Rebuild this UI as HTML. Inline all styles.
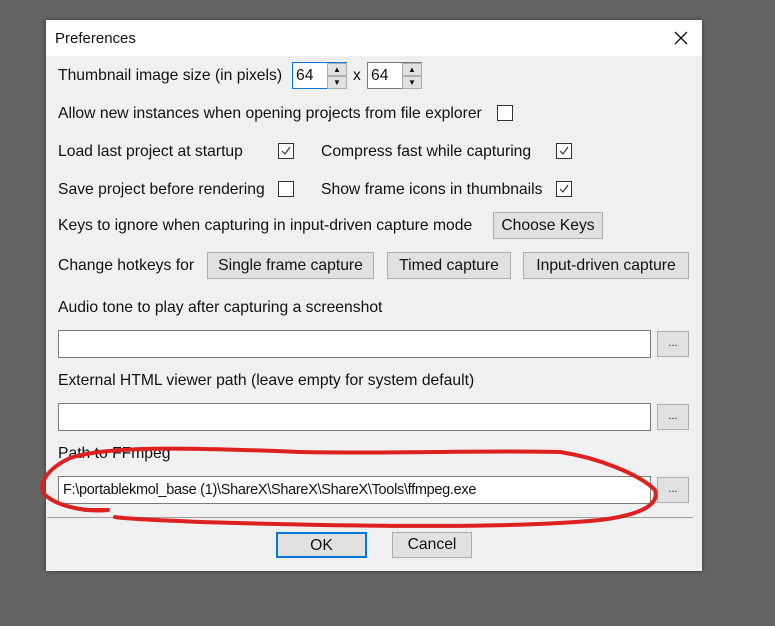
<!DOCTYPE html>
<html><head><style>
body{margin:0;width:775px;height:626px;background:#646464;position:relative;overflow:hidden;font-family:"Liberation Sans",sans-serif;font-size:15.7px;color:#111}
.d{position:absolute;left:46px;top:20px;width:656px;height:551px;background:#f0f0f0;box-shadow:0 0 4px rgba(0,0,0,.5)}
.t{position:absolute;left:0;top:0;width:656px;height:36px;background:#fff}
.a{position:absolute;white-space:nowrap}
.cb{position:absolute;width:14px;height:14px;border:1px solid #333;background:#fff}
.cb svg{position:absolute;left:1px;top:1px}
.b{position:absolute;background:#e1e1e1;border:1px solid #adadad;box-sizing:border-box;text-align:center;white-space:nowrap}
.tb{position:absolute;background:#fff;border:1px solid #7a7a7a;box-sizing:border-box}
</style></head><body>
<div class="d">
<div class="t"></div>
<div class="a" style="left:9px;top:10px;font-size:15px">Preferences</div>
<svg class="a" style="left:628px;top:11px" width="14" height="14"><path d="M1 1L13 13M13 1L1 13" stroke="#111" stroke-width="1.3"/></svg>
</div>
<div class="a" style="left:58px;top:67px">Thumbnail image size (in pixels)</div>
<div class="tb" style="left:292px;top:62px;width:55px;height:27px;border-color:#0078d7"><span class="a" style="left:3px;top:4px">64</span></div>
<div class="b" style="left:327px;top:63px;width:20px;height:13px;font-size:8px;line-height:11px">▲</div>
<div class="b" style="left:327px;top:76px;width:20px;height:13px;font-size:8px;line-height:11px">▼</div>
<div class="a" style="left:353px;top:67px">x</div>
<div class="tb" style="left:367px;top:62px;width:55px;height:27px"><span class="a" style="left:3px;top:4px">64</span></div>
<div class="b" style="left:402px;top:63px;width:20px;height:13px;font-size:8px;line-height:11px">▲</div>
<div class="b" style="left:402px;top:76px;width:20px;height:13px;font-size:8px;line-height:11px">▼</div>
<div class="a" style="left:58px;top:105px">Allow new instances when opening projects from file explorer</div>
<div class="cb" style="left:497px;top:105px"></div>
<div class="a" style="left:58px;top:143px">Load last project at startup</div>
<div class="cb" style="left:278px;top:143px"><svg width="12" height="12"><path d="M2 6L5 9L10 2" stroke="#333" fill="none" stroke-width="1.2"/></svg></div>
<div class="a" style="left:321px;top:143px">Compress fast while capturing</div>
<div class="cb" style="left:556px;top:143px"><svg width="12" height="12"><path d="M2 6L5 9L10 2" stroke="#333" fill="none" stroke-width="1.2"/></svg></div>
<div class="a" style="left:58px;top:181px">Save project before rendering</div>
<div class="cb" style="left:278px;top:181px"></div>
<div class="a" style="left:321px;top:181px">Show frame icons in thumbnails</div>
<div class="cb" style="left:556px;top:181px"><svg width="12" height="12"><path d="M2 6L5 9L10 2" stroke="#333" fill="none" stroke-width="1.2"/></svg></div>
<div class="a" style="left:58px;top:217px">Keys to ignore when capturing in input-driven capture mode</div>
<div class="b" style="left:493px;top:212px;width:110px;height:27px;line-height:25px">Choose Keys</div>
<div class="a" style="left:58px;top:257px">Change hotkeys for</div>
<div class="b" style="left:207px;top:252px;width:167px;height:27px;line-height:25px">Single frame capture</div>
<div class="b" style="left:387px;top:252px;width:124px;height:27px;line-height:25px">Timed capture</div>
<div class="b" style="left:523px;top:252px;width:166px;height:27px;line-height:25px">Input-driven capture</div>
<div class="a" style="left:58px;top:299px">Audio tone to play after capturing a screenshot</div>
<div class="tb" style="left:58px;top:330px;width:593px;height:28px"></div>
<div class="b" style="left:657px;top:331px;width:32px;height:26px;font-size:11px;line-height:22px">...</div>
<div class="a" style="left:58px;top:372px">External HTML viewer path (leave empty for system default)</div>
<div class="tb" style="left:58px;top:403px;width:593px;height:28px"></div>
<div class="b" style="left:657px;top:404px;width:32px;height:26px;font-size:11px;line-height:22px">...</div>
<div class="a" style="left:58px;top:445px">Path to FFmpeg</div>
<div class="tb" style="left:58px;top:476px;width:593px;height:28px"><span class="a" style="left:4px;top:5px;font-size:14.5px;letter-spacing:-0.3px">F:\portablekmol_base (1)\ShareX\ShareX\ShareX\Tools\ffmpeg.exe</span></div>
<div class="b" style="left:657px;top:477px;width:32px;height:26px;font-size:11px;line-height:22px">...</div>
<div class="a" style="left:47px;top:517px;width:646px;height:1px;background:#a0a0a0"></div>
<div class="b" style="left:276px;top:532px;width:91px;height:26px;line-height:23px;border:2px solid #0078d7">OK</div>
<div class="b" style="left:392px;top:532px;width:80px;height:26px;line-height:24px">Cancel</div>
<svg class="a" style="left:0;top:0" width="775" height="626"><path d="M108 510C90 512 60 508 45 495C38 485 45 470 70 458C110 445 200 448 300 452C400 454 480 450 560 452C600 458 640 475 655 490C660 505 640 515 600 520C500 530 300 525 200 522C150 520 120 518 115 517M105 510L85 510" stroke="#dd2020" stroke-width="4" fill="none" stroke-linecap="round"/></svg>
</body></html>
